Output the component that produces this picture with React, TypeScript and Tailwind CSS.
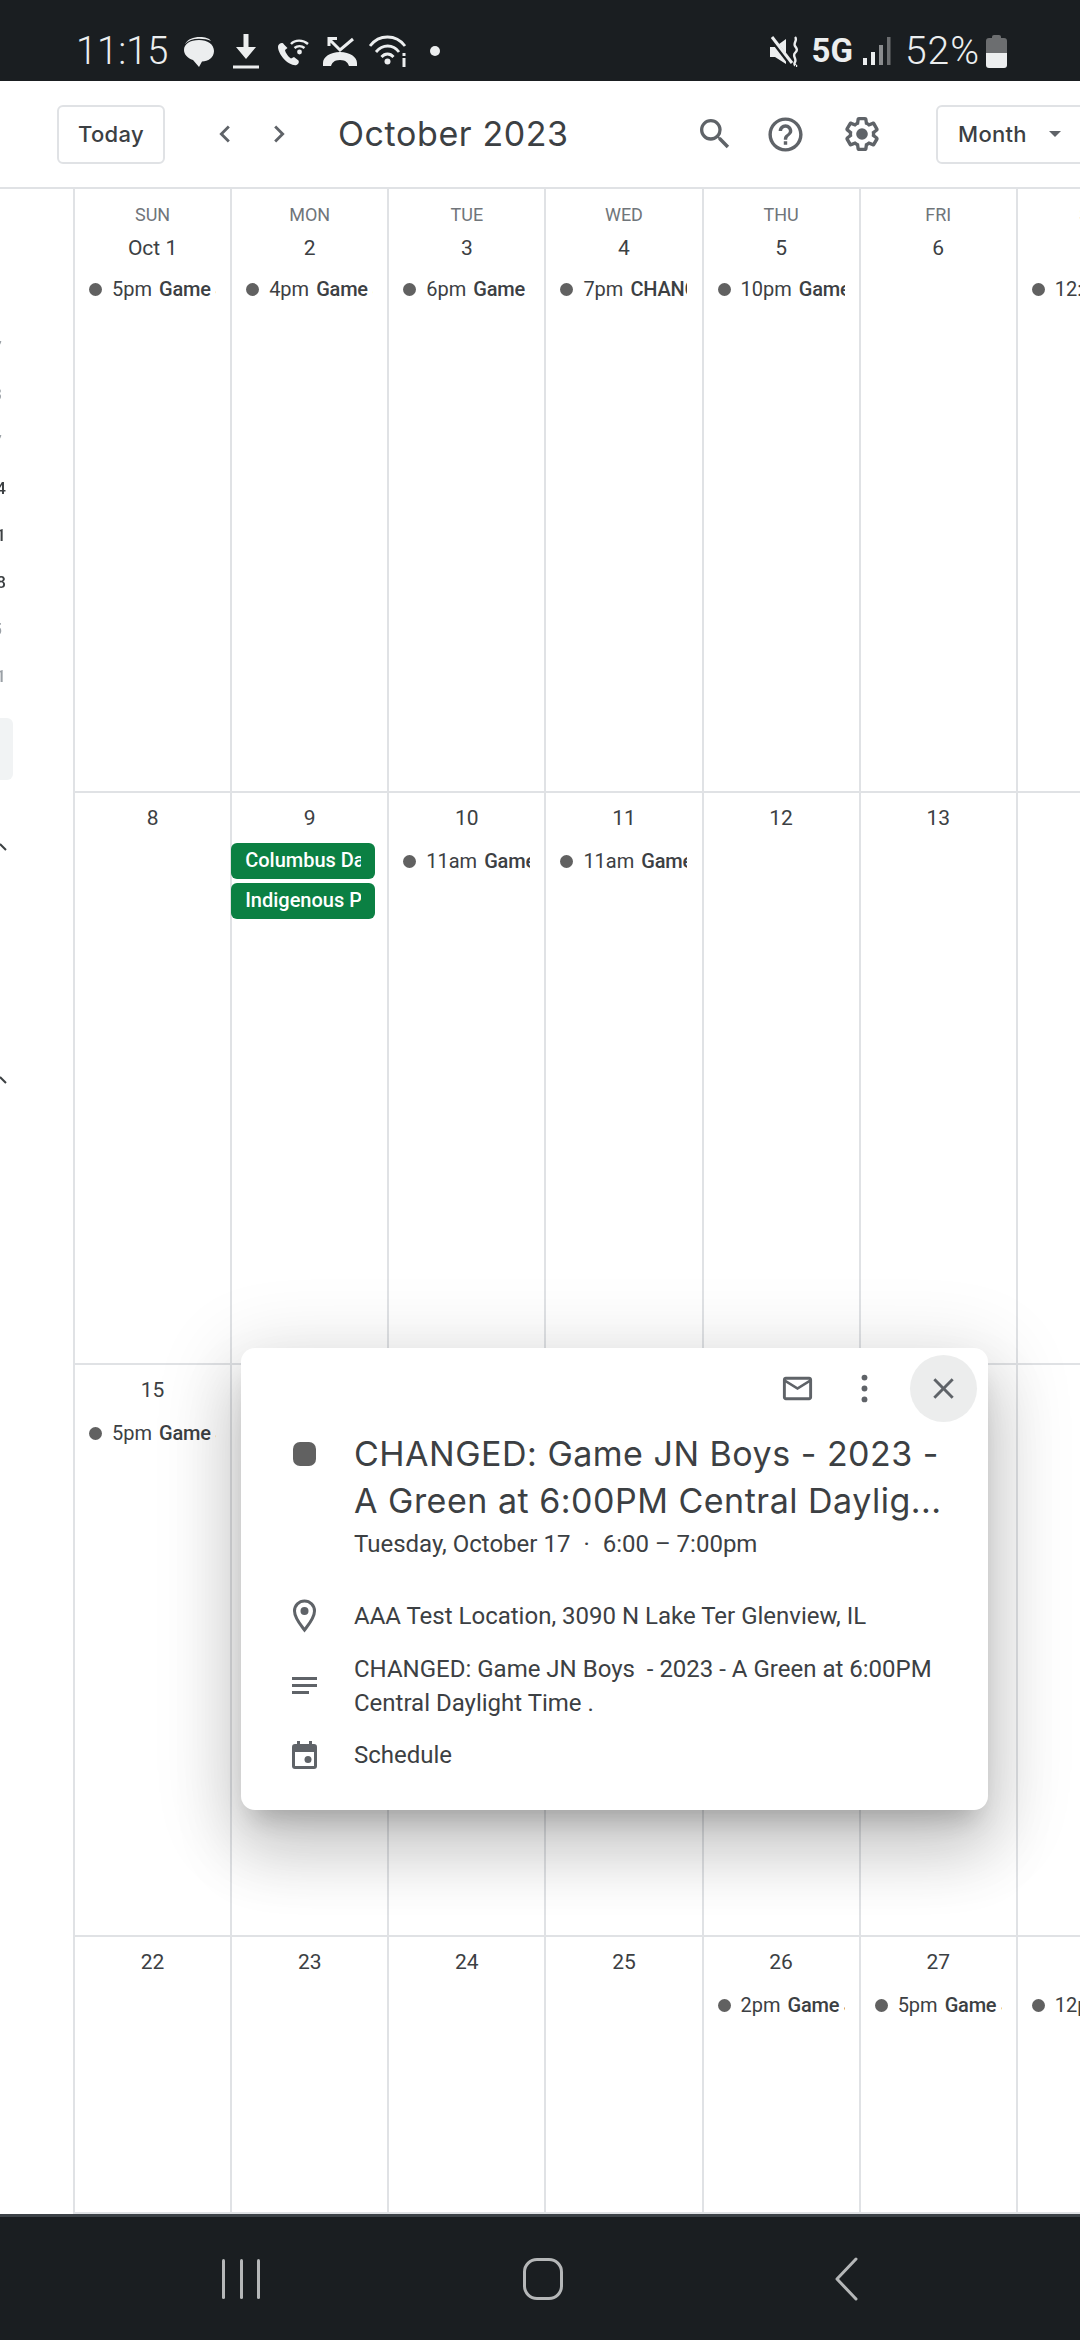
import React from "react";

type Ev = { time?: string; title: string; chip?: boolean };
type Day = { label?: string; date: string; events?: Ev[] };

const rows: Day[][] = [
  [
    { label: "SUN", date: "Oct 1", events: [{ time: "5pm", title: "Game JN Boys" }] },
    { label: "MON", date: "2", events: [{ time: "4pm", title: "Game JN Boys" }] },
    { label: "TUE", date: "3", events: [{ time: "6pm", title: "Game JN Boys" }] },
    { label: "WED", date: "4", events: [{ time: "7pm", title: "CHANGED: Game" }] },
    { label: "THU", date: "5", events: [{ time: "10pm", title: "Game JN Boys" }] },
    { label: "FRI", date: "6" },
    { label: "SAT", date: "7", events: [{ time: "12:30pm", title: "Game" }] },
  ],
  [
    { date: "8" },
    {
      date: "9",
      events: [
        { title: "Columbus Day", chip: true },
        { title: "Indigenous Peoples' Day", chip: true },
      ],
    },
    { date: "10", events: [{ time: "11am", title: "Game JN Boys" }] },
    { date: "11", events: [{ time: "11am", title: "Game JN Boys" }] },
    { date: "12" },
    { date: "13" },
    { date: "14" },
  ],
  [
    { date: "15", events: [{ time: "5pm", title: "Game JN Boys" }] },
    { date: "16" },
    { date: "17" },
    { date: "18" },
    { date: "19" },
    { date: "20" },
    { date: "21" },
  ],
  [
    { date: "22" },
    { date: "23" },
    { date: "24" },
    { date: "25" },
    { date: "26", events: [{ time: "2pm", title: "Game JN Boys" }] },
    { date: "27", events: [{ time: "5pm", title: "Game JN Boys" }] },
    { date: "28", events: [{ time: "12pm", title: "Game" }] },
  ],
];

function Event({ ev }: { ev: Ev }) {
  if (ev.chip) {
    return (
      <div className="-ml-px h-[36px] w-[144px] rounded-[6px] bg-[#0b8043] pl-[14px] pr-[14px] text-[20px] leading-[35px] font-medium text-white">
        <div className="overflow-hidden whitespace-nowrap">{ev.title}</div>
      </div>
    );
  }
  return (
    <div className="flex h-[36px] w-[141px] items-center overflow-hidden whitespace-nowrap pl-[14px] text-[20px] text-[#3c4043]">
      <span className="mr-[10px] h-[13px] w-[13px] shrink-0 rounded-full bg-[#616161]" />
      <span className="mr-[7px]">{ev.time}</span>
      <span className="font-medium tracking-[-0.2px]">{ev.title}</span>
    </div>
  );
}

function Cell({ day }: { day: Day }) {
  return (
    <div className="flex flex-col border-b-2 border-l-2 border-[#e0e2e5]">
      <div className={day.label ? "flex flex-col items-center pt-[16px]" : "flex flex-col items-center pt-[10px]"}>
        {day.label && (
          <div className="mb-[8px] h-[20px] text-[18px] leading-[20px] text-[#70757a]">{day.label}</div>
        )}
        <div className="h-[30px] text-[21px] leading-[30px] text-[#3c4043]">{day.date}</div>
      </div>
      <div className={day.label ? "mt-[8px] flex flex-col gap-[4px]" : "mt-[10px] flex flex-col gap-[4px]"}>
        {day.events?.map((ev) => (
          <Event key={ev.title} ev={ev} />
        ))}
      </div>
    </div>
  );
}

function SideDigit({ text, narrow, faint }: { text: string; narrow?: boolean; faint?: boolean }) {
  return (
    <div className="flex h-[47px] items-center">
      <div
        className={
          "flex justify-end overflow-hidden text-[17px] font-medium " +
          (narrow ? "w-[2px] " : "w-[6px] ") +
          (faint ? "text-[#9aa0a6]" : "text-[#3c4043]")
        }
      >
        {text}
      </div>
    </div>
  );
}

function Sidebar() {
  return (
    <div className="flex w-[73px] shrink-0 flex-col pt-[135px] will-change-transform">
      <SideDigit text="7" narrow faint />
      <SideDigit text="3" narrow faint />
      <SideDigit text="7" narrow faint />
      <SideDigit text="14" />
      <SideDigit text="21" />
      <SideDigit text="28" />
      <SideDigit text="5" narrow faint />
      <SideDigit text="11" faint />
      <div className="mt-[18px] h-[62px] w-[13px] rounded-r-[6px] bg-[#f1f3f4]" />
      <svg className="mt-[63px]" width="7" height="8" viewBox="0 0 7 8">
        <path d="M0 1l6 6" stroke="#3c4043" strokeWidth="2" fill="none" />
      </svg>
      <svg className="mt-[225px]" width="7" height="8" viewBox="0 0 7 8">
        <path d="M0 1l6 6" stroke="#3c4043" strokeWidth="2" fill="none" />
      </svg>
    </div>
  );
}

function StatusLeftIcons() {
  return (
    <div className="flex items-center">
      {/* chat */}
      <svg className="ml-[15px] shrink-0" width="32" height="31" viewBox="0 0 32 31" fill="#eceeef">
        <path d="M16 4c8.500 0 15 4.400 15 11s-6 10.500-12 10.500l-3 5.500-6-7C4 22 1 18 1 14 1 8 7 4 16 4z" />
        <path d="M2 8C5 3 10 1 17 1c5 0 9 1 11 4-3-1.500-7-2.200-12-2.200C10 2.800 5 4.500 2 8z" />
      </svg>
      {/* download */}
      <svg className="ml-[18px] shrink-0" width="26" height="35" viewBox="0 0 26 35" fill="#eceeef">
        <path d="M10.500 0h5v13h7.500L13 25 3 13h7.500z" />
        <rect y="31.500" width="26" height="3" />
      </svg>
      {/* wifi call */}
      <svg className="ml-[18px] shrink-0" width="32" height="30" viewBox="0 0 32 30" fill="none">
        <path
          d="M7 8.500C5.500 6 3 7 1.500 9c-1.500 2 .5 8 4.500 13s10.500 8 13.500 7c1.500-.5 3-2.500 2-4.500l-4.500-3.500-3 1.500C11.500 21 8.500 17 8 14l2.500-2z"
          fill="#eceeef"
        />
        <path d="M14 8c4-4.500 12-4.500 17 0M17.500 12c3-2.500 7-2.500 10 0" stroke="#eceeef" strokeWidth="2.400" />
        <circle cx="22.500" cy="16" r="2.400" fill="#eceeef" />
      </svg>
      {/* missed call */}
      <svg className="ml-[14px] shrink-0" width="34" height="30" viewBox="0 0 34 30" fill="none">
        <path d="M6 10V2.500h8M6 3l11 11L30 3" stroke="#eceeef" strokeWidth="3" />
        <path d="M0 27c0-6 7-11 17-11s17 5 17 11v3h-8c-1-3-3-6-9-6s-8 3-9 6H0z" fill="#eceeef" />
      </svg>
      {/* wifi */}
      <svg className="ml-[12px] shrink-0" width="38" height="32" viewBox="0 0 38 32" fill="none">
        <path d="M1 11C10 -1 27 -1 36 11M7 17c6.500-8 17-8 23 0M12.500 22c3.500-4 8.500-4 12 0" stroke="#eceeef" strokeWidth="2.800" />
        <circle cx="18.500" cy="26.500" r="3" fill="#eceeef" />
        <rect x="33.500" y="23" width="3" height="9" fill="#eceeef" />
        <rect x="33.500" y="18" width="3" height="3" fill="#eceeef" />
      </svg>
      <span className="ml-[23px] h-[10px] w-[10px] shrink-0 rounded-full bg-[#eceeef]" />
    </div>
  );
}

function StatusRightIcons() {
  return (
    <div className="flex items-center text-[#eceeef]">
      {/* mute vibrate */}
      <svg className="shrink-0" width="31" height="31" viewBox="0 0 31 31" fill="none">
        <path d="M1 11h5l11-8v25l-11-7H1z" fill="#eceeef" />
        <path d="M2 2l20 26" stroke="#1a1e21" strokeWidth="5" />
        <path d="M3 1l20 26" stroke="#eceeef" strokeWidth="3" />
        <path d="M26 1c3 3-2 6 0 9s3 4 0 7 2 6 0 9 2 4 1 4" stroke="#eceeef" strokeWidth="2.400" />
      </svg>
      <span className="ml-[11px] text-[33px] leading-[36px] font-bold">5G</span>
      <svg className="ml-[10px] shrink-0" width="28" height="30" viewBox="0 0 28 30">
        <rect x="0" y="22" width="4" height="7" fill="#eceeef" />
        <rect x="8" y="16" width="4" height="13" fill="#eceeef" />
        <rect x="16" y="9" width="4" height="20" fill="#8a8c8e" />
        <rect x="24" y="1" width="3.500" height="28" fill="#6c6e70" />
      </svg>
      <span className="ml-[14px] text-[39px] leading-[44px] font-light tracking-[1px]">52%</span>
      <div className="ml-[6px] flex h-[33px] w-[21px] flex-col items-center">
        <div className="h-[3px] w-[9px] rounded-t-[2px] bg-[#6c6e70]" />
        <div className="h-[15px] w-[21px] rounded-t-[3px] bg-[#6c6e70]" />
        <div className="h-[15px] w-[21px] rounded-b-[3px] bg-[#eceeef]" />
      </div>
    </div>
  );
}

function Popup() {
  return (
    <div className="absolute left-[241px] top-[1348px] h-[462px] w-[747px] rounded-[14px] bg-white text-[#3c4043] shadow-[0_41px_65px_5px_rgba(0,0,0,0.14),0_15px_79px_14px_rgba(0,0,0,0.12),0_19px_26px_-12px_rgba(0,0,0,0.2)]">
      <div className="flex items-center justify-end gap-[12px] pr-[11px] pt-[7px]">
        <div className="-mr-[12px] flex h-[67px] w-[67px] items-center justify-center">
          <svg width="35" height="35" viewBox="0 0 24 24" fill="#5f6368">
            <path d="M20 4H4c-1.100 0-1.990.9-1.990 2L2 18c0 1.100.9 2 2 2h16c1.100 0 2-.9 2-2V6c0-1.100-.9-2-2-2zm0 14H4V8l8 5 8-5v10zm-8-7L4 6h16l-8 5z" />
          </svg>
        </div>
        <div className="flex h-[67px] w-[67px] items-center justify-center">
          <svg width="35" height="35" viewBox="0 0 24 24" fill="#5f6368">
            <circle cx="12" cy="4.500" r="2" />
            <circle cx="12" cy="12" r="2" />
            <circle cx="12" cy="19.500" r="2" />
          </svg>
        </div>
        <div className="flex h-[67px] w-[67px] items-center justify-center rounded-full bg-[#eceded]">
          <svg width="35" height="35" viewBox="0 0 24 24" fill="#5f6368">
            <path d="M19 6.410L17.590 5 12 10.590 6.410 5 5 6.410 10.590 12 5 17.590 6.410 19 12 13.410 17.590 19 19 17.590 13.410 12z" />
          </svg>
        </div>
      </div>

      <div className="flex pl-[52px] pt-[8px]">
        <div className="w-[61px] shrink-0 pt-[12px]">
          <div className="h-[24px] w-[23px] rounded-[7px] bg-[#616161]" />
        </div>
        <div>
          <div className="whitespace-nowrap font-['Inter',sans-serif] text-[34px] leading-[47px] tracking-[0.5px]">
            <div>CHANGED: Game JN Boys - 2023 -</div>
            <div>A Green at 6:00PM Central Daylig...</div>
          </div>
          <div className="mt-[3px] flex whitespace-pre text-[24px] leading-[34px]">
            <span>Tuesday, October 17</span>
            <span className="mx-[13px]">·</span>
            <span>6:00 – 7:00pm</span>
          </div>
        </div>
      </div>

      <div className="mt-[38px] flex items-center pl-[51px]">
        <svg className="mr-[37px] shrink-0" width="25" height="34" viewBox="0 0 25 34" fill="none">
          <path d="M12.500 31C8 25 2.500 19 2.500 12a10 10 0 0 1 20 0c0 7-5.500 13-10 19z" stroke="#5f6368" strokeWidth="3" />
          <circle cx="12.500" cy="12" r="4" fill="#5f6368" />
        </svg>
        <div className="text-[24px] leading-[34px]">AAA Test Location, 3090 N Lake Ter Glenview, IL</div>
      </div>

      <div className="mt-[19px] flex items-center pl-[51px]">
        <svg className="mr-[37px] shrink-0" width="25" height="18" viewBox="0 0 25 18" fill="#5f6368">
          <rect width="25" height="3" />
          <rect y="7" width="25" height="3" />
          <rect y="14" width="17" height="3" />
        </svg>
        <div className="whitespace-pre text-[24px] leading-[34px]">
          <div>{"CHANGED: Game JN Boys  - 2023 - A Green at 6:00PM"}</div>
          <div>Central Daylight Time .</div>
        </div>
      </div>

      <div className="mt-[18px] flex items-center pl-[51px]">
        <svg className="mr-[37px] shrink-0" width="25" height="28" viewBox="0 0 25 28" fill="#5f6368">
          <path d="M5 0h3v3h9V0h3v3h2a3 3 0 0 1 3 3v19a3 3 0 0 1-3 3H3a3 3 0 0 1-3-3V6a3 3 0 0 1 3-3h2zM3 11v14h19V11z" />
          <circle cx="16" cy="18.500" r="3.500" />
        </svg>
        <div className="text-[24px] leading-[34px]">Schedule</div>
      </div>
    </div>
  );
}

export default function App() {
  return (
    <div className="relative flex h-[2340px] w-[1080px] flex-col overflow-hidden bg-white font-['Roboto',sans-serif]">
      <div className="flex h-[81px] shrink-0 items-end justify-between bg-[#1a1e21] pb-[8px] pl-[76px] pr-[73px]">
        <div className="flex items-center">
          <span className="w-[92px] shrink-0 text-[38px] leading-[44px] font-light text-[#eceeef]">11:15</span>
          <StatusLeftIcons />
        </div>
        <StatusRightIcons />
      </div>

      <div className="flex h-[108px] shrink-0 items-center whitespace-nowrap border-b-2 border-[#e0e2e5] pl-[57px] text-[#3c4043]">
        <div className="flex h-[59px] w-[108px] shrink-0 items-center justify-center rounded-[6px] border-2 border-[#e0e2e5] font-['Inter',sans-serif] text-[22px] font-medium tracking-[0.3px]">
          Today
        </div>
        <svg className="ml-[43px] shrink-0" width="34" height="34" viewBox="0 0 24 24" fill="#5f6368">
          <path d="M15.410 7.410L14 6l-6 6 6 6 1.410-1.410L10.830 12z" />
        </svg>
        <svg className="ml-[20px] shrink-0" width="34" height="34" viewBox="0 0 24 24" fill="#5f6368">
          <path d="M10 6L8.590 7.410 13.170 12l-4.580 4.590L10 18l6-6z" />
        </svg>
        <div className="ml-[42px] w-[357px] shrink-0 font-['Inter',sans-serif] text-[34px] leading-[44px] tracking-[0.6px]">
          October 2023
        </div>
        <svg className="shrink-0" width="40" height="40" viewBox="0 0 24 24" fill="#5f6368">
          <path d="M15.500 14h-.79l-.28-.27A6.471 6.471 0 0 0 16 9.500 6.500 6.500 0 1 0 9.500 16c1.610 0 3.090-.59 4.230-1.570l.27.28v.79l5 4.990L20.490 19l-4.990-5zm-6 0C7.010 14 5 11.990 5 9.500S7.010 5 9.500 5 14 7.010 14 9.500 11.990 14 9.500 14z" />
        </svg>
        <svg className="ml-[30px] shrink-0" width="41" height="41" viewBox="0 0 24 24" fill="#5f6368">
          <path d="M11 18h2v-2h-2v2zm1-16C6.480 2 2 6.480 2 12s4.480 10 10 10 10-4.480 10-10S17.520 2 12 2zm0 18c-4.410 0-8-3.590-8-8s3.590-8 8-8 8 3.590 8 8-3.590 8-8 8zm0-14c-2.210 0-4 1.790-4 4h2c0-1.100.9-2 2-2s2 .9 2 2c0 2-3 1.750-3 5h2c0-2.250 3-2.500 3-5 0-2.210-1.790-4-4-4z" />
        </svg>
        <svg className="ml-[36px] shrink-0" width="40" height="40" viewBox="0 0 24 24" fill="#5f6368">
          <path d="M13.850 22.250h-3.700c-.74 0-1.360-.54-1.450-1.270l-.27-1.890c-.27-.14-.53-.29-.79-.46l-1.800.72c-.7.26-1.470-.03-1.810-.65L2.200 15.530c-.35-.66-.2-1.440.36-1.880l1.530-1.190c-.01-.15-.02-.3-.02-.46 0-.15.01-.31.02-.46l-1.520-1.190c-.59-.45-.74-1.260-.37-1.880l1.850-3.190c.34-.62 1.110-.9 1.790-.63l1.810.73c.26-.17.52-.32.78-.46l.27-1.910c.09-.7.71-1.250 1.440-1.250h3.700c.74 0 1.360.54 1.450 1.270l.27 1.890c.27.14.53.29.79.46l1.800-.72c.71-.26 1.480.03 1.820.65l1.840 3.180c.36.66.2 1.440-.36 1.880l-1.520 1.190c.01.15.02.3.02.46s-.01.31-.02.46l1.520 1.190c.56.45.72 1.230.37 1.860l-1.860 3.220c-.34.62-1.110.9-1.800.63l-1.800-.72c-.26.17-.52.32-.78.46l-.27 1.910c-.1.68-.72 1.220-1.460 1.220zm-3.230-2h2.760l.37-2.550.53-.22c.44-.18.88-.44 1.340-.78l.45-.34 2.380.96 1.380-2.400-2.030-1.580.07-.56c.03-.26.06-.51.06-.78s-.03-.53-.06-.78l-.07-.56 2.030-1.580-1.390-2.400-2.390.96-.45-.35c-.42-.32-.87-.58-1.330-.77l-.52-.22-.37-2.550h-2.760l-.37 2.550-.53.21c-.44.19-.88.44-1.340.79l-.45.33-2.380-.95-1.390 2.390 2.030 1.580-.07.56a7 7 0 0 0-.06.79c0 .26.02.53.06.78l.07.56-2.030 1.580 1.380 2.400 2.390-.96.45.35c.43.33.86.58 1.330.77l.53.22.38 2.550z" />
          <circle cx="12" cy="12" r="3.500" />
        </svg>
        <div className="ml-[54px] flex h-[59px] w-[200px] shrink-0 items-center rounded-[6px] border-2 border-[#e0e2e5] pl-[20px] font-['Inter',sans-serif] text-[22px] font-medium tracking-[0.3px]">
          Month
          <span className="ml-[22px] h-0 w-0 border-x-[6px] border-t-[6px] border-x-transparent border-t-[#5f6368]" />
        </div>
      </div>

      <div className="flex min-h-0 flex-1">
        <Sidebar />
        <div className="grid w-[1100px] shrink-0 grid-cols-[repeat(7,157.14px)] grid-rows-[604px_572px_572px_1fr]">
          {rows.flat().map((day) => (
            <Cell key={day.date} day={day} />
          ))}
        </div>
      </div>

      <div className="flex h-[126px] shrink-0 items-center border-t-[3px] border-[#3c4247] bg-[#1a1e21] pl-[222px]">
        <div className="flex gap-[14.500px]">
          <div className="h-[40px] w-[3px] rounded-full bg-[#b5b7b8]" />
          <div className="h-[40px] w-[3px] rounded-full bg-[#b5b7b8]" />
          <div className="h-[40px] w-[3px] rounded-full bg-[#b5b7b8]" />
        </div>
        <div className="ml-[263px] h-[42px] w-[40px] rounded-[14px] border-[3px] border-[#b5b7b8]" />
        <svg className="ml-[271px]" width="24" height="44" viewBox="0 0 24 44" fill="none">
          <path d="M22 2L3 22l19 20" stroke="#b5b7b8" strokeWidth="3" strokeLinecap="round" strokeLinejoin="round" />
        </svg>
      </div>

      <Popup />
    </div>
  );
}
